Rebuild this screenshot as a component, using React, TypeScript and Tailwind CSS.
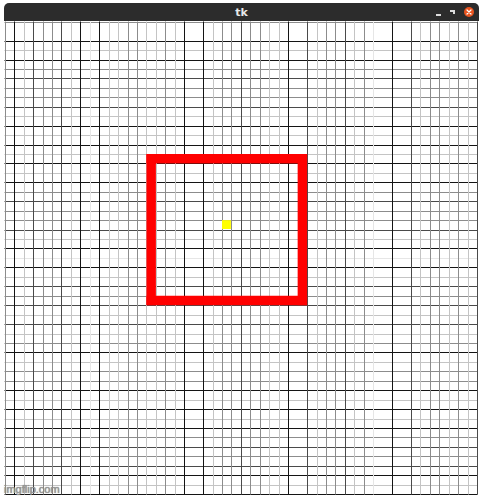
import React from 'react';

// line shades picked off the reference, one per grid line (0 = not visible)
const SHADES = ['none', '#e6e6e6', '#c4c4c4', '#8c8c8c', '#4a4a4a', '#141414'];

const V = [3, 5, 2, 4, 3, 3, 4, 2, 5, 1, 5, 2, 2, 3, 3, 2, 2, 3, 2, 5, 0, 5, 2, 3, 3, 4, 3, 3, 2, 2, 5, 0, 4, 2, 3, 3, 4, 2, 3, 1, 0, 5, 0, 4, 2, 3, 3, 2, 3, 2, 4];
const H = [3, 0, 5, 2, 5, 3, 4, 3, 3, 4, 2, 5, 2, 5, 2, 5, 2, 5, 3, 4, 3, 3, 4, 2, 5, 1, 5, 2, 4, 3, 4, 2, 4, 2, 3, 5, 2, 3, 3, 5, 2, 5, 2, 5, 3, 4, 3, 4, 5, 2, 5];

const STEP = 9.45;
const OFF = 0.7;
const pos = (k: number) => Math.round(OFF + k * STEP) + 0.5;
const edge = (k: number) => OFF + k * STEP;

function Canvas() {
  const size = 475;
  return (
    <svg width={size} height={size} className="block">
      <rect x={0} y={0} width={size} height={size} fill="#ffffff" />
      {H.map((s, k) =>
        s === 0 ? null : (
          <line key={'h' + k} x1={0.5} x2={473.5} y1={pos(k)} y2={pos(k)} stroke={SHADES[s]} strokeWidth={1} />
        )
      )}
      {V.map((s, k) =>
        s === 0 ? null : (
          <line key={'v' + k} y1={0.5} y2={473.5} x1={pos(k)} x2={pos(k)} stroke={SHADES[s]} strokeWidth={1} />
        )
      )}
      {/* red outline, one cell thick */}
      <g fill="#ff0000">
        <rect x={edge(15)} y={edge(14)} width={edge(32) - edge(15)} height={STEP} />
        <rect x={edge(15)} y={edge(29)} width={edge(32) - edge(15)} height={STEP} />
        <rect x={edge(15)} y={edge(14)} width={STEP} height={edge(30) - edge(14)} />
        <rect x={edge(31)} y={edge(14)} width={STEP} height={edge(30) - edge(14)} />
      </g>
      <rect x={edge(23)} y={edge(21)} width={STEP - 0.6} height={STEP - 0.6} fill="#ffff00" />
    </svg>
  );
}

function TitleBar() {
  return (
    <div className="relative h-[18px] bg-[#2c2c2c] rounded-t-[5px] flex items-center justify-center">
      <span className="text-[11px] font-bold leading-none text-[#e8e8e8] font-['DejaVu_Sans',sans-serif]">tk</span>
      <div className="absolute right-[5px] top-0 h-[18px] flex items-center gap-[9px]">
        <div className="w-[5px] h-[2px] bg-[#dcdcdc] mt-[5px]" />
        <div className="w-[5px] h-[4px] border-t-2 border-r-2 border-[#dcdcdc] -mt-[1px]" />
        <div className="w-[10px] h-[10px] rounded-full bg-[#e9541f] flex items-center justify-center">
          <svg width="6" height="6" viewBox="0 0 6 6">
            <path d="M1 1 L5 5 M5 1 L1 5" stroke="#ffffff" strokeWidth="1.2" strokeLinecap="round" />
          </svg>
        </div>
      </div>
    </div>
  );
}

export default function App() {
  return (
    <div className="relative w-[483px] h-[500px] bg-white pt-[3px] pl-[4px] overflow-hidden">
      <div className="w-[475px] flex flex-col">
        <TitleBar />
        <Canvas />
      </div>
      {/* watermark */}
      <span className="absolute left-[4px] bottom-[5px] text-[11px] leading-none text-[#9a9a9a] font-['Liberation_Sans',sans-serif] [text-shadow:0_0_1px_#555]">
        imgflip.com
      </span>
    </div>
  );
}
